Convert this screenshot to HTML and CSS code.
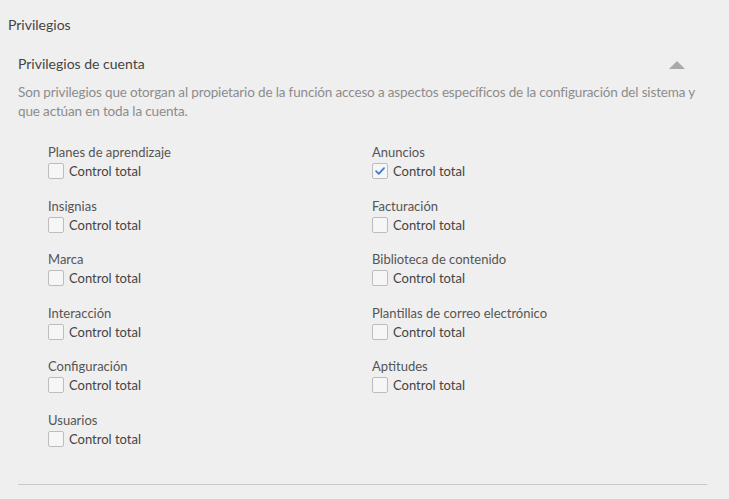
FILE: index.html
```html
<!DOCTYPE html>
<html lang="es">
<head>
<meta charset="utf-8">
<link rel="stylesheet" href="styles.css">
</head>
<body>
<div class="page">
  <div class="title">Privilegios</div>
  <section class="group">
    <div class="group-head">
      <div class="group-title">Privilegios de cuenta</div>
      <span class="caret"></span>
    </div>
    <p class="desc">Son privilegios que otorgan al propietario de la función acceso a aspectos específicos de la configuración del sistema y que actúan en toda la cuenta.</p>
    <div class="grid">
      <div class="item"><div class="label">Planes de aprendizaje</div><label class="check"><span class="box"></span>Control total</label></div>
      <div class="item"><div class="label">Anuncios</div><label class="check"><span class="box checked"><svg viewBox="0 0 16 16" width="16" height="16"><path d="M3.5 8.2 L6.6 11.2 L12.6 4.8" fill="none" stroke="#3d7bd0" stroke-width="2" stroke-linecap="round" stroke-linejoin="round"/></svg></span>Control total</label></div>
      <div class="item"><div class="label">Insignias</div><label class="check"><span class="box"></span>Control total</label></div>
      <div class="item"><div class="label">Facturación</div><label class="check"><span class="box"></span>Control total</label></div>
      <div class="item"><div class="label">Marca</div><label class="check"><span class="box"></span>Control total</label></div>
      <div class="item"><div class="label">Biblioteca de contenido</div><label class="check"><span class="box"></span>Control total</label></div>
      <div class="item"><div class="label">Interacción</div><label class="check"><span class="box"></span>Control total</label></div>
      <div class="item"><div class="label">Plantillas de correo electrónico</div><label class="check"><span class="box"></span>Control total</label></div>
      <div class="item"><div class="label">Configuración</div><label class="check"><span class="box"></span>Control total</label></div>
      <div class="item"><div class="label">Aptitudes</div><label class="check"><span class="box"></span>Control total</label></div>
      <div class="item"><div class="label">Usuarios</div><label class="check"><span class="box"></span>Control total</label></div>
    </div>
    <div class="divider"></div>
  </section>
</div>
</body>
</html>
```

FILE: styles.css
```css
html, body {
  margin: 0;
  padding: 0;
  background: #efefef;
}
body {
  font-family: Lato, "Open Sans", "Liberation Sans", sans-serif;
  font-size: 13px;
  color: #444;
}
.page {
  padding: 15px 22px 0 8px;
}
.title {
  font-size: 14px;
  line-height: 20px;
  color: #444;
}
.group {
  padding: 19px 0 0 10px;
}
.group-head {
  display: flex;
  align-items: center;
  justify-content: space-between;
  padding-right: 22px;
}
.group-title {
  font-size: 14px;
  line-height: 20px;
  color: #444;
}
.caret {
  width: 0;
  height: 0;
  border-left: 8px solid transparent;
  border-right: 8px solid transparent;
  border-bottom: 8px solid #aaa;
  margin-top: 2px;
}
.desc {
  margin: 9px 0 0;
  font-size: 13.5px;
  letter-spacing: -0.15px;
  line-height: 19px;
  color: #8c8c8c;
}
.grid {
  display: grid;
  grid-template-columns: 324px 1fr;
  row-gap: 16.5px;
  padding: 22px 0 0 30px;
}
.item {
  display: flex;
  flex-direction: column;
}
.label {
  line-height: 19px;
  color: #555;
}
.check {
  display: flex;
  align-items: center;
  gap: 5px;
  line-height: 18px;
  color: #444;
}
.box {
  width: 14px;
  height: 14px;
  border: 1px solid #bdbdbd;
  border-radius: 2px;
  background: #f6f6f6;
  display: flex;
  align-items: center;
  justify-content: center;
}
.box svg {
  width: 14px;
  height: 14px;
}
.divider {
  margin-top: 36px;
  border-top: 1px solid #c8c8c8;
}
```
